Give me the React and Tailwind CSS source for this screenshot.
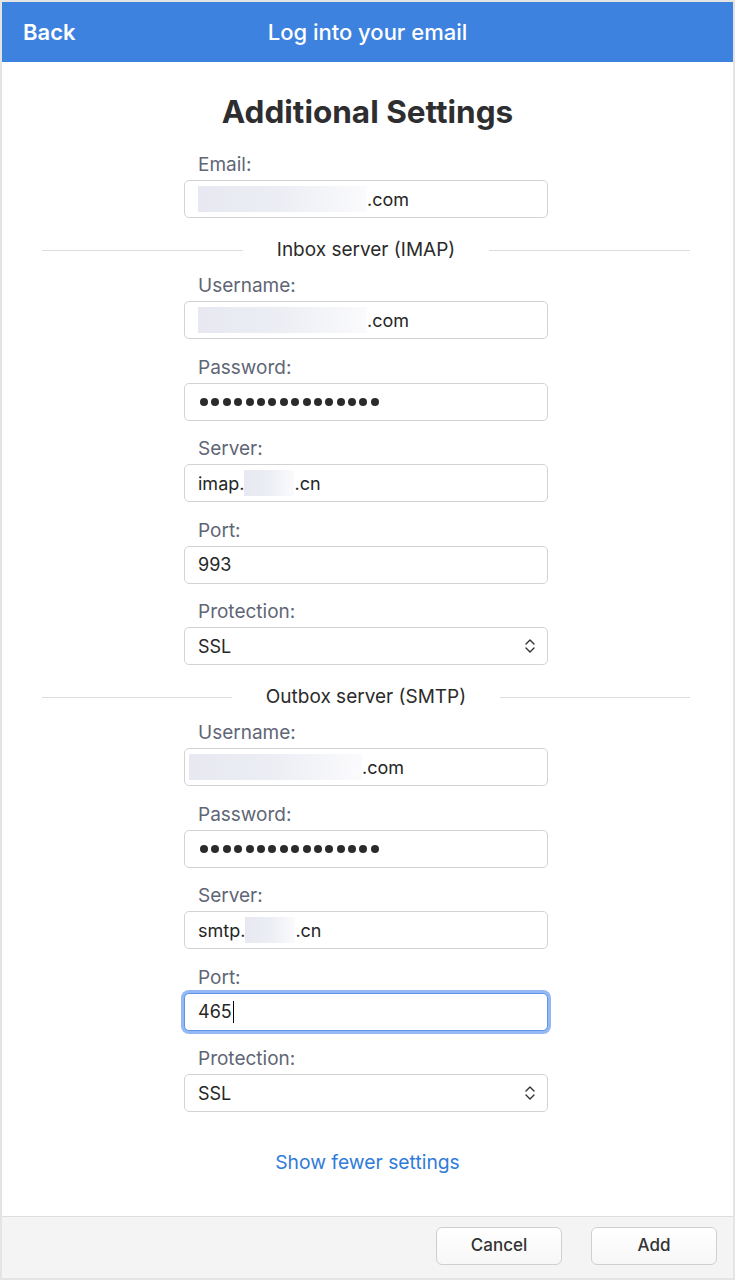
import React from "react";

const font = { fontFamily: "Inter, 'Noto Sans', 'Liberation Sans', sans-serif" };

function Blur({ w }) {
  return (
    <span
      className="inline-block h-[26px] bg-gradient-to-r from-[#e7e8f1] via-[#eceef4] to-[#fbfbfd]"
      style={{ width: w }}
    />
  );
}

function Label({ children }) {
  return <div className="pl-[14px] text-[19px] leading-[22px] text-[#5f6676] mb-[4px]">{children}</div>;
}

function Box({ children, focused }) {
  return (
    <div
      className={
        "h-[38px] rounded-[5px] bg-white flex items-center pl-[13px] pr-[10px] text-[18px] text-[#262626] " +
        (focused
          ? "border border-[#5d95ea] shadow-[0_0_0_3px_#93b8f3]"
          : "border border-[#d3d3d3]")
      }
    >
      {children}
    </div>
  );
}

function Dots() {
  return (
    <div className="flex gap-[3.4px] pl-[2px]">
      {Array.from({ length: 16 }).map((_, i) => (
        <span key={i} className="w-[8px] h-[8px] rounded-full bg-[#2b2b2b]" />
      ))}
    </div>
  );
}

function Chevrons() {
  return (
    <svg width="12" height="18" viewBox="0 0 12 18" className="ml-auto mr-[1px]">
      <path d="M2 7 L6 3 L10 7" fill="none" stroke="#333" strokeWidth="1.4" strokeLinecap="round" strokeLinejoin="round" />
      <path d="M2 11 L6 15 L10 11" fill="none" stroke="#333" strokeWidth="1.4" strokeLinecap="round" strokeLinejoin="round" />
    </svg>
  );
}

function Field({ label, children, focused, className = "" }) {
  return (
    <div className={className}>
      <Label>{label}</Label>
      <Box focused={focused}>{children}</Box>
    </div>
  );
}

function Divider({ text }) {
  return (
    <div className="w-[648px] ml-[40px] flex items-center mt-[20px] mb-[13px]">
      <div className="flex-1 h-px bg-[#dcdcdc]" />
      <div className="px-[34px] text-[19px] leading-[24px] text-[#2b2b2b]">{text}</div>
      <div className="flex-1 h-px bg-[#dcdcdc]" />
    </div>
  );
}

export default function App() {
  return (
    <div className="w-[735px] h-[1280px] border-2 border-[#e4e4e4] flex flex-col bg-white" style={font}>
      <div className="h-[60px] bg-[#3d82df] flex items-center relative shrink-0">
        <div className="pl-[21px] text-white text-[22px] font-semibold">Back</div>
        <div className="absolute inset-0 flex items-center justify-center text-white text-[22px] font-medium pointer-events-none">
          Log into your email
        </div>
      </div>

      <div className="flex-1 flex flex-col">
        <h1 className="mt-[32px] text-center text-[31.5px] leading-[36px] font-bold text-[#2e2e30]">Additional Settings</h1>

        <div className="w-[364px] ml-[182px] mt-[24px]">
          <Field label="Email:">
            <Blur w={169} />
            <span>.com</span>
          </Field>
        </div>

        <Divider text="Inbox server (IMAP)" />

        <div className="w-[364px] ml-[182px] flex flex-col gap-[17.5px]">
          <Field label="Username:">
            <Blur w={169} />
            <span>.com</span>
          </Field>
          <Field label="Password:">
            <Dots />
          </Field>
          <Field label="Server:">
            <span>imap.</span>
            <Blur w={50} />
            <span>.cn</span>
          </Field>
          <Field label="Port:">
            <span>993</span>
          </Field>
          <Field label="Protection:">
            <span>SSL</span>
            <Chevrons />
          </Field>
        </div>

        <Divider text="Outbox server (SMTP)" />

        <div className="w-[364px] ml-[182px] flex flex-col gap-[17.5px]">
          <Field label="Username:">
            <span className="-ml-[9px] flex items-center">
              <Blur w={173} />
            </span>
            <span>.com</span>
          </Field>
          <Field label="Password:">
            <Dots />
          </Field>
          <Field label="Server:">
            <span>smtp.</span>
            <Blur w={50} />
            <span>.cn</span>
          </Field>
          <Field label="Port:" focused>
            <span>465</span>
            <span className="w-px h-[22px] bg-black ml-[1px]" />
          </Field>
          <Field label="Protection:">
            <span>SSL</span>
            <Chevrons />
          </Field>
        </div>

        <div className="mt-[37px] text-center text-[19.3px] leading-[26px] text-[#2f7bd9]">Show fewer settings</div>
      </div>

      <div className="h-[62px] shrink-0 border-t border-[#dedede] bg-[#f4f4f4] flex items-start justify-end pt-[10px] pr-[16px] gap-[29px]">
        <button className="w-[126px] h-[38px] rounded-[6px] border border-[#cfcfcf] bg-gradient-to-b from-white to-[#f7f7f7] text-[17px] font-medium text-[#333]">
          Cancel
        </button>
        <button className="w-[126px] h-[38px] rounded-[6px] border border-[#cfcfcf] bg-gradient-to-b from-white to-[#f7f7f7] text-[17px] font-medium text-[#333]">
          Add
        </button>
      </div>
    </div>
  );
}
